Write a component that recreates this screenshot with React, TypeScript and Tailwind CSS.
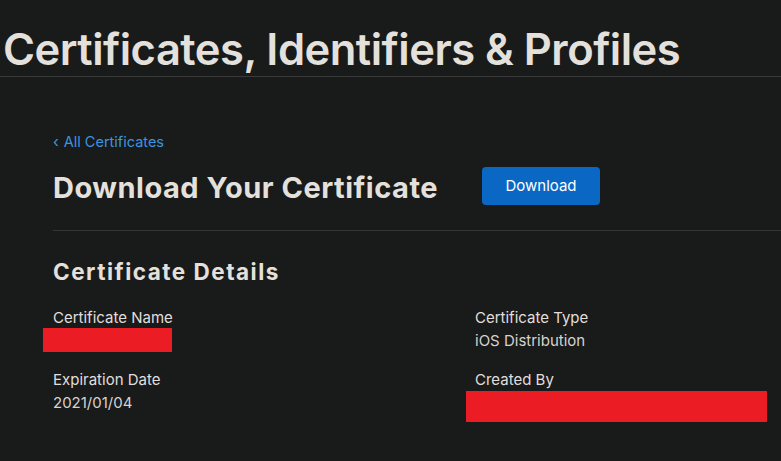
import React from 'react';

const font = { fontFamily: 'Inter, "Noto Sans", sans-serif' };

function Field({ label, value }: { label: string; value: string }) {
  return (
    <div className="flex flex-col">
      <span className="text-[15px] leading-[22px] text-[#e2dfdb]">{label}</span>
      <span className="text-[15px] leading-[24px] text-[#d6d3cf]">{value}</span>
    </div>
  );
}

export default function App() {
  return (
    <div className="w-[781px] h-[461px] overflow-hidden bg-[#191a1a]" style={font}>
      <header className="pt-[22px] pl-[3px] border-b border-[#3a3a3a]">
        <h1 className="text-[43.5px] leading-[54px] font-semibold tracking-[-0.5px] text-[#e4e1dd]">
          Certificates, Identifiers &amp; Profiles
        </h1>
      </header>

      <main className="pl-[53px] pt-[56px]">
        <a className="flex items-center gap-[5px] text-[14.5px] leading-[18px] text-[#3b95e0]">
          <span className="text-[15px]">‹</span>
          <span>All Certificates</span>
        </a>

        <div className="flex items-start mt-[15px] pb-[24px] border-b border-[#353535]">
          <h2 className="mt-[4px] text-[29px] leading-[36px] font-bold tracking-[0.5px] text-[#e4e1dd] w-[429px]">
            Download Your Certificate
          </h2>
          <button className="mt-[1px] h-[38px] w-[118px] rounded-[4px] bg-[#0a67c4] text-[15px] text-white">
            Download
          </button>
        </div>

        <h3 className="mt-[26px] text-[22.5px] leading-[30px] font-bold tracking-[1.5px] text-[#e4e1dd]">
          Certificate Details
        </h3>

        <div className="grid grid-cols-[422px_1fr] mt-[20px] gap-y-[16px]">
          <div className="flex flex-col">
            <span className="text-[15px] leading-[22px] text-[#e2dfdb]">Certificate Name</span>
            <div className="ml-[-10px] mt-[-1px] h-[24px] w-[129px] bg-[#ec1c24]" />
          </div>
          <Field label="Certificate Type" value="iOS Distribution" />
          <Field label="Expiration Date" value="2021/01/04" />
          <div className="flex flex-col">
            <span className="text-[15px] leading-[22px] text-[#e2dfdb]">Created By</span>
            <div className="ml-[-9px] mt-[0px] h-[31px] w-[301px] bg-[#ec1c24]" />
          </div>
        </div>
      </main>
    </div>
  );
}
